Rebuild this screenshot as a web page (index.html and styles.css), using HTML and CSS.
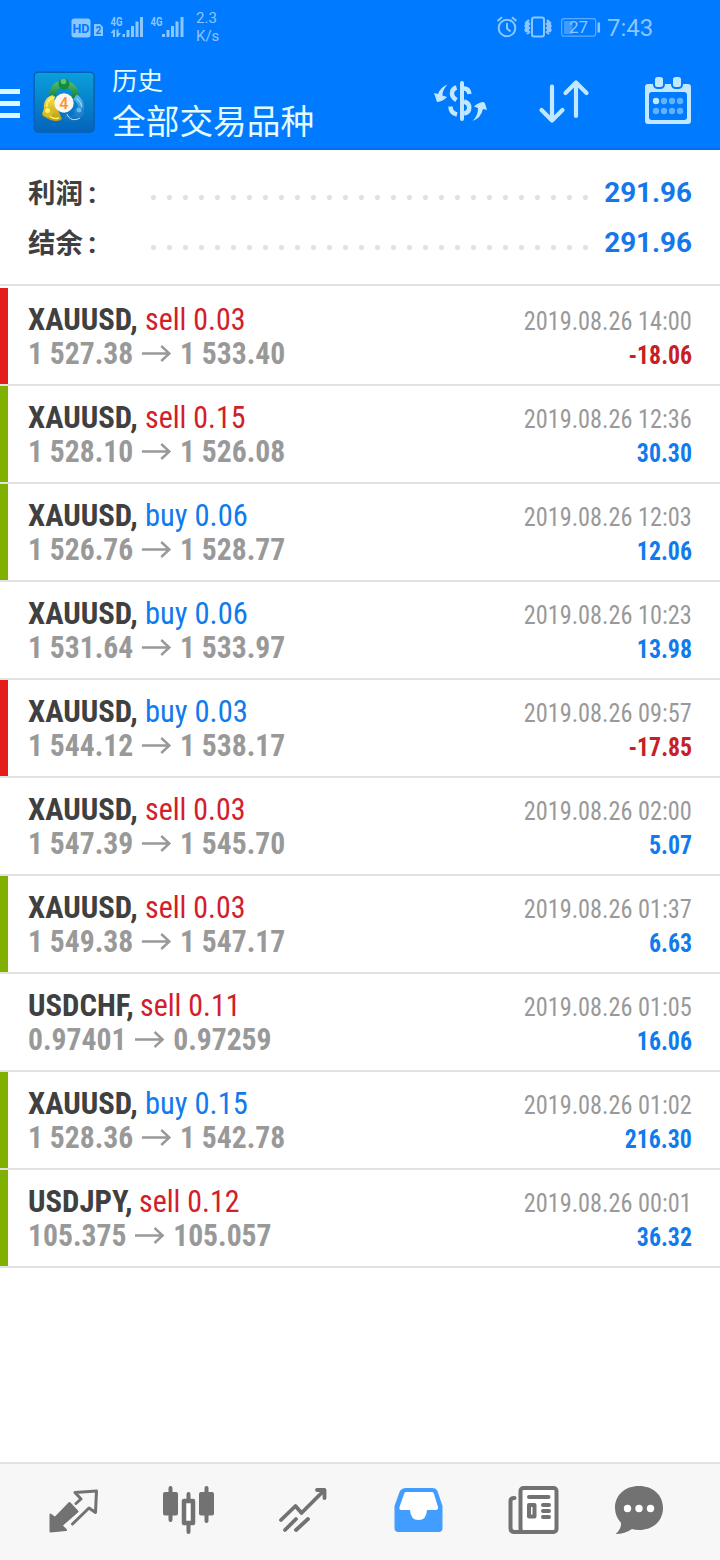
FILE: index.html
```html
<!DOCTYPE html>
<html lang="zh-CN">
<head>
<meta charset="utf-8">
<title>历史</title>
<link rel="stylesheet" href="styles.css">
</head>
<body>
<div class="screen">
  <header class="header">
    <div class="statusbar">
      <svg class="signals" width="122" height="56" viewBox="70 0 122 56" fill="#8cc6ff">
        <rect x="71.5" y="18.500" width="19" height="19" rx="3"/>
        <text class="hd" x="72.500" y="32.500" textLength="17" lengthAdjust="spacingAndGlyphs">HD</text>
        <path d="M94 24h6l3 3v9h-9z"/>
        <text class="sim" x="95.500" y="34">2</text>
        <text class="gen" x="110.500" y="26" textLength="12" lengthAdjust="spacingAndGlyphs">4G</text>
        <path d="M110.500 33l3-3.500h1.500V37h-2v-4zM116.500 29.500h2V33h2.500l-3 4h-1.500zM122.500 34h2.500v3h-2.500zM126.500 30h3v7h-3zM131 26h3v11h-3zM135.500 21.500h3v15.500h-3zM140 17h3v20h-3z"/>
        <text class="gen" x="150.500" y="26" textLength="12" lengthAdjust="spacingAndGlyphs">4G</text>
        <path d="M162 34h3v3h-3zM166.500 30h3v7h-3zM171 26h3v11h-3zM175.500 21.500h3v15.500h-3zM180.500 17h3v20h-3z"/>
      </svg>
      <div class="speed"><span>2.3</span><span>K/s</span></div>
      <svg class="indicators" width="108" height="56" viewBox="494 0 108 56" fill="none" stroke="#8cc6ff" stroke-width="2">
        <circle cx="507" cy="28" r="8.300"/>
        <path d="M507 23v5.500l3.500 3M497.500 21l4.500-3.800M516.500 21l-4.500-3.800"/>
        <rect x="532" y="17.500" width="12" height="19" rx="2"/>
        <path stroke-width="2.400" d="M529 20l-2 2 2 2-2 2 2 2-2 2 2 2-2 2M525.500 22l1 2-1 2 1 2-1 2 1 2M547 20l2 2-2 2 2 2-2 2 2 2-2 2 2 2M550.500 22l-1 2 1 2-1 2 1 2-1 2"/>
        <rect x="561.700" y="18.700" width="34" height="17.500" rx="2.500" stroke-width="1.200" stroke="#5cacff"/>
        <rect x="564" y="21" width="8.500" height="13" fill="#3d9cff" stroke="none"/>
        <path stroke-width="2.500" d="M598.800 22.500v10"/>
        <text class="battery" x="569" y="33.300" textLength="19">27</text>
      </svg>
      <span class="clock">7:43</span>
    </div>
    <div class="toolbar">
      <svg class="menu" width="20" height="94" viewBox="0 56 20 94" fill="#dcf5ff">
        <path d="M0 89h20v5H0zM0 101h20v5H0zM0 113h20v5H0z"/>
      </svg>
      <svg class="logo" width="64" height="94" viewBox="32 56 64 94">
        <defs>
          <linearGradient id="tile" x2="0" y2="1"><stop offset="0" stop-color="#0aa0dc"/><stop offset="1" stop-color="#0463ba"/></linearGradient>
          <linearGradient id="green" x2="0" y2="1"><stop offset="0" stop-color="#4bb565"/><stop offset="1" stop-color="#137d3b"/></linearGradient>
          <linearGradient id="gold" x2="0" y2="1"><stop offset="0" stop-color="#ffe84a"/><stop offset="1" stop-color="#b79613"/></linearGradient>
          <linearGradient id="blue" x2="0" y2="1"><stop offset="0" stop-color="#5cbdf3"/><stop offset="1" stop-color="#116fc0"/></linearGradient>
        </defs>
        <rect x="34.200" y="72.200" width="60" height="60" rx="4" fill="url(#tile)" stroke="#0763b8" stroke-width="1.500"/>
        <path d="M53.500 97C51 88 57 84 64 84s13 5 11 14" fill="none" stroke="url(#green)" stroke-width="6.500"/>
        <path d="M53 95c-8 2-10 9-9 15-3 3-2 6 1 7 6 4 12 6 17 2l-4-9z" fill="url(#gold)"/>
        <path d="M55 97c-7 2-9 7-8 11M49 116c4 3 7 3 10 2" fill="none" stroke="#fff06a" stroke-width="1.500"/>
        <path d="M75 97c6 4 7 10 5 15-3 7-10 9-16 5" fill="none" stroke="url(#blue)" stroke-width="6"/>
        <path d="M67 114c2 6 8 7 13 4M77 99c4 3 5 7 4 10" fill="none" stroke="#b9e3fb" stroke-width="1"/>
        <circle cx="64" cy="84" r="5.500" fill="#178a3e"/><circle cx="63.500" cy="81.500" r="2.800" fill="#5cc572"/>
        <circle cx="48" cy="112" r="5" fill="#d9bd21"/><circle cx="47.500" cy="110.500" r="2.500" fill="#fff36e"/>
        <circle cx="79" cy="112" r="5.200" fill="#2080cb"/><circle cx="79" cy="110" r="2.500" fill="#60b9ee"/>
        <circle cx="64" cy="103" r="9.700" fill="#fff7ee"/>
        <text class="four" x="59.200" y="108.800">4</text>
      </svg>
      <div class="titles"><span class="title">历史</span><span class="subtitle">全部交易品种</span></div>
      <svg class="actions" width="290" height="94" viewBox="430 56 290 94" fill="none" stroke="#c2e8ff" stroke-linecap="round" stroke-linejoin="round">
        <path stroke-width="4" d="M462 83v36"/>
        <path stroke-width="4.500" stroke-linecap="butt" d="M456.500 87.500c-6 2-6 9 0 12.500M464 88.500c3 0 5 2 5.500 5.500M464 101.500c7 2 7 10.500 0 12M450.500 106.500c0 4.500 2 7 6.500 8"/>
        <path stroke="none" fill="#c2e8ff" d="M447.500 84.500q-5.500 6-5 11l4.500 1.500q-4 4.500-10 5l-3-9 4 1q2-6.500 9.500-9.500zM472.500 121q5.500-5 5.500-13l-4-1.500q4-4 9-4.500 1.500 0 2 1.500l2 6.500-4-1q-2 9-10.500 12z"/>
        <g stroke-width="4.200"><path d="M552 86.500v34M541.500 110l10.500 10.500 10.500-10.500M576 116V83M565.500 93L576 82.500 586.500 93"/></g>
        <path stroke="none" fill="#c2e8ff" fill-rule="evenodd" d="M648 84h40q3 0 3 3v34q0 3-3 3h-40q-3 0-3-3V87q0-3 3-3zm4 8q-3 0-3 3v22q0 3 3 3h32q3 0 3-3V95q0-3-3-3z"/>
        <g stroke="#007aff" stroke-width="2" fill="#c2e8ff"><rect x="654" y="76" width="10" height="12" rx="3.500"/><rect x="672" y="76" width="10" height="12" rx="3.500"/></g>
        <g stroke="none" fill="#62b1ff"><circle cx="656" cy="101" r="3.200" fill="#c2e8ff"/><circle cx="664" cy="101" r="3.200"/><circle cx="672" cy="101" r="3.200"/><circle cx="680" cy="101" r="3.200"/><circle cx="656" cy="111" r="3.200"/><circle cx="664" cy="111" r="3.200"/><circle cx="672" cy="111" r="3.200"/><circle cx="680" cy="111" r="3.200"/></g>
      </svg>
    </div>
  </header>

  <section class="summary">
    <div class="total"><span class="label">利润<i>:</i></span><span class="dots"></span><b>291.96</b></div>
    <div class="total"><span class="label">结余<i>:</i></span><span class="dots"></span><b>291.96</b></div>
  </section>

  <main class="deals" id="deals"></main>

  <nav class="tabs">
    <svg width="131" height="96" viewBox="0 1464 131 96">
      <path fill="#727272" stroke="#727272" stroke-width="2" stroke-linejoin="round" d="M69.500 1503l8 8.500L61.500 1525.500l4.500 4.500-15.500 1.500v-17l4.500 3.500z"/>
      <path fill="none" stroke="#727272" stroke-width="3" stroke-linejoin="round" stroke-linecap="round" d="M76 1503.500l5-4.500-6-6.500 21.500-1.500-1 21.500-6.500-4.500L72.500 1524"/>
    </svg>
    <svg width="115" height="96" viewBox="131 1464 115 96">
      <g fill="#727272"><rect x="163" y="1492" width="15" height="23.500" rx="2"/><rect x="199" y="1492" width="15" height="23.500" rx="2"/></g>
      <path stroke="#727272" stroke-width="4" stroke-linecap="round" d="M170.500 1488v32M206.500 1488v33M188.500 1494v6M188.500 1525v7"/>
      <rect x="184" y="1501" width="9" height="22" fill="#fff" stroke="#727272" stroke-width="4.500" stroke-linejoin="round"/>
    </svg>
    <svg width="115" height="96" viewBox="246 1464 115 96" fill="none" stroke="#727272" stroke-width="3.800" stroke-linecap="round" stroke-linejoin="round">
      <path d="M281 1520l14.500-14 6 7 22.500-22.500M317 1490h7.500v8M285 1530l11-11M296 1530l12-11"/>
    </svg>
    <svg width="115" height="96" viewBox="361 1464 115 96">
      <path fill="#419dff" d="M406 1488h26q4 0 5.500 3l5 15v22q0 4-4 4h-40q-4 0-4-4v-22l5-14q2-4 6.500-4z"/>
      <path fill="#fff" d="M406 1492h26q1.500 0 2 2l4 13q.5 3-2.500 3H427q-.500 10-8.500 10t-8.500-10h-9q-2 0-1.500-3l4.500-13q.5-2 2-2z"/>
    </svg>
    <svg width="115" height="96" viewBox="476 1464 115 96" fill="none" stroke="#727272" stroke-linecap="round" stroke-linejoin="round">
      <path stroke-width="4" d="M514.500 1498q-4 0-4 3v27q0 4 4 4h9"/>
      <rect x="520.500" y="1488" width="36" height="44" rx="3" fill="#fff" stroke-width="4"/>
      <path stroke-width="4" d="M529 1497h19.500M543 1505h6M543 1511h6M543 1517h6"/>
      <rect x="529" y="1505" width="5.500" height="11.500" stroke-width="4"/>
    </svg>
    <svg width="129" height="96" viewBox="591 1464 129 96">
      <path fill="#727272" d="M639 1486c14 0 24 9 24 22s-10 22-24 22q-4 0-7-1-7 5-16.500 5 6-5 5.500-11-6-7-6-15c0-13 10-22 24-22z"/>
      <g fill="#fff"><circle cx="627.500" cy="1508.500" r="3.700"/><circle cx="639" cy="1508.500" r="3.700"/><circle cx="650.500" cy="1508.500" r="3.700"/></g>
    </svg>
  </nav>
</div>
<script src="deals.js"></script>
</body>
</html>
```
FILE: styles.css
```css
* { box-sizing: border-box; }
body { margin: 0; background: #fff; font-family: "Roboto Condensed", Roboto, "Noto Sans CJK SC", sans-serif; }
svg { display: block; flex: none; }
.screen { width: 720px; height: 1560px; display: flex; flex-direction: column; overflow: hidden; }
.header { height: 150px; flex: none; background: #007aff; border-bottom: 2px solid #0070f0; }
.statusbar { height: 56px; display: flex; padding-left: 70px; color: #8cc6ff; font-family: Roboto, sans-serif; }
.hd { font: 700 13px Roboto, sans-serif; fill: #007aff; }
.sim { font: 700 10px Roboto, sans-serif; fill: #007aff; }
.gen { font: 700 12px Roboto, sans-serif; }
.battery { font: 400 17px Roboto, sans-serif; fill: #8cc6ff; stroke: none; }
.speed { display: flex; flex-direction: column; width: 302px; padding: 9px 0 0 4px; font-size: 15px; line-height: 18px; }
.clock { padding: 1px 0 0 5px; font-size: 24px; line-height: 54px; }
.toolbar { display: flex; height: 92px; }
.logo { margin-left: 12px; }
.four { font: 500 16px Roboto, sans-serif; fill: #f6922d; }
.titles { display: flex; flex-direction: column; width: 334px; padding: 6px 0 0 16px; color: #e3fbff; font-family: "Noto Sans CJK SC", sans-serif; font-weight: 400; }
.title { font-size: 25.5px; line-height: 34px; }
.subtitle { font-size: 33.7px; line-height: 46px; padding-top: 1px; }
.summary { height: 136px; margin-bottom: 2px; padding: 17px 28px 0; border-bottom: 2px solid #e2e2e2; flex: none; }
.total { display: flex; height: 50px; line-height: 50px; }
.label { width: 114px; font: 700 27.5px/48px "Noto Sans CJK SC", sans-serif; color: #404040; white-space: nowrap; }
.label i { font: 700 30px/48px Roboto, sans-serif; margin-left: 5px; }
.dots { flex: none; width: 448px; height: 50px; background: radial-gradient(circle at 11.5px 30.5px, #e2e2e2 2.2px, transparent 3px) 0 0 / 16px 50px repeat-x; }
.total b { flex: 1; text-align: right; color: #1478ea; font: 700 27.8px/52px Roboto, sans-serif; white-space: nowrap; }
.deals { flex: 1; }
.deal { display: flex; justify-content: space-between; height: 98px; padding: 14px 28px 0 20px; border-left: 8px solid #fff; box-shadow: inset 0 -2px #e2e2e2; }
.deal.loss { border-image: linear-gradient(#e51c1c 96px, #e2e2e2 96px) 0 0 0 8; }
.deal.gain { border-image: linear-gradient(#80b000 96px, #e2e2e2 96px) 0 0 0 8; }
.deal.plain { border-image: linear-gradient(#fff 96px, #e2e2e2 96px) 0 0 0 8; }
.left, .right { display: flex; flex-direction: column; white-space: pre; }
.right { align-items: flex-end; padding-top: 2px; }
.order { font-size: 31px; line-height: 36px; height: 35px; color: #404040; }
.order b { display: inline-block; transform: scaleX(.99); transform-origin: 0 0; }
.sell, .buy { display: inline-block; margin-left: -1.5px; transform-origin: 0 0; }
.sell { color: #d1202a; transform: scaleX(.965); }
.buy { color: #107bed; transform: scaleX(.985); }
.prices { display: flex; align-items: center; gap: 9px; font-size: 31px; line-height: 34px; font-weight: 700; color: #999; transform: scaleX(.955); transform-origin: 0 0; }
.date { font-size: 26px; line-height: 34px; color: #999; transform: scaleX(.935); transform-origin: 100% 0; }
.profit { font-size: 25.5px; line-height: 34px; font-weight: 700; color: #107bed; transform: scaleX(.935); transform-origin: 100% 0; }
.negative { color: #c62026; }
.tabs { height: 98px; flex: none; display: flex; background: #f7f7f7; border-top: 2px solid #e2e2e2; }
```
FILE: deals.js
```js
const deals = [
  ["loss", "XAUUSD", "sell", "0.03", "1 527.38", "1 533.40", "14:00", "-18.06"],
  ["gain", "XAUUSD", "sell", "0.15", "1 528.10", "1 526.08", "12:36", "30.30"],
  ["gain", "XAUUSD", "buy", "0.06", "1 526.76", "1 528.77", "12:03", "12.06"],
  ["plain", "XAUUSD", "buy", "0.06", "1 531.64", "1 533.97", "10:23", "13.98"],
  ["loss", "XAUUSD", "buy", "0.03", "1 544.12", "1 538.17", "09:57", "-17.85"],
  ["plain", "XAUUSD", "sell", "0.03", "1 547.39", "1 545.70", "02:00", "5.07"],
  ["gain", "XAUUSD", "sell", "0.03", "1 549.38", "1 547.17", "01:37", "6.63"],
  ["plain", "USDCHF", "sell", "0.11", "0.97401", "0.97259", "01:05", "16.06"],
  ["gain", "XAUUSD", "buy", "0.15", "1 528.36", "1 542.78", "01:02", "216.30"],
  ["gain", "USDJPY", "sell", "0.12", "105.375", "105.057", "00:01", "36.32"]
];
const arrow = '<svg width="31" height="18" viewBox="0 0 31 18" fill="none" stroke="#999" stroke-width="2.5"><path d="M0 8.500h29M20.500 1l8.500 7.500-8.500 7.500"/></svg>';
document.getElementById("deals").innerHTML = deals.map(([mark, symbol, side, lots, open, close, time, profit]) => `
  <div class="deal ${mark}"><div class="left"><div class="order"><b>${symbol},</b> <span class="${side}">${side} ${lots}</span></div><div class="prices"><span>${open}</span>${arrow}<span>${close}</span></div></div><div class="right"><span class="date">2019.08.26 ${time}</span><span class="profit ${profit[0] === "-" ? "negative" : ""}">${profit}</span></div></div>`).join("");
```
